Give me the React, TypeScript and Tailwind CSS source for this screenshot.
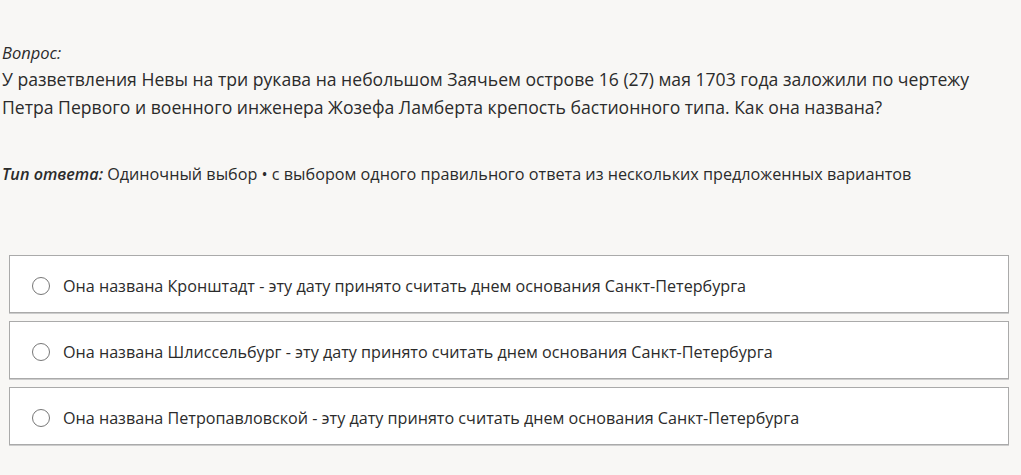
import React from 'react'

const options = [
  'Она названа Кронштадт - эту дату принято считать днем основания Санкт-Петербурга',
  'Она названа Шлиссельбург - эту дату принято считать днем основания Санкт-Петербурга',
  'Она названа Петропавловской - эту дату принято считать днем основания Санкт-Петербурга',
]

const App: React.FC = () => {
  return (
    <div className="min-h-[475px] bg-[#f8f7f5] text-[#2b2b2b] font-['Open_Sans',sans-serif] pt-[42px] pl-[2px] pr-[12px]">
      <div className="text-[16.5px] italic leading-[22px]">Вопрос:</div>
      <p className="text-[17.6px] leading-[28px] mt-[1px]">
        У разветвления Невы на три рукава на небольшом Заячьем острове 16 (27) мая 1703 года заложили по чертежу
        Петра Первого и военного инженера Жозефа Ламберта крепость бастионного типа. Как она названа?
      </p>
      <p className="text-[16.2px] leading-[24px] mt-[41px]">
        <span className="italic font-semibold">Тип ответа:</span> Одиночный выбор • с выбором одного правильного ответа из нескольких предложенных вариантов
      </p>
      <div className="flex flex-col gap-[8px] mt-[69px] ml-[7px]">
        {options.map((o) => (
          <label
            key={o}
            className="flex items-center h-[58px] bg-white border border-[#aaa] shadow-[0_1px_0_#ccc] pl-[22px] pt-[4px] cursor-pointer"
          >
            <span className="w-[18px] h-[18px] rounded-full border border-[#777] mr-[13px] shrink-0" />
            <span className="text-[16.15px]">{o}</span>
          </label>
        ))}
      </div>
    </div>
  )
}

export default App
